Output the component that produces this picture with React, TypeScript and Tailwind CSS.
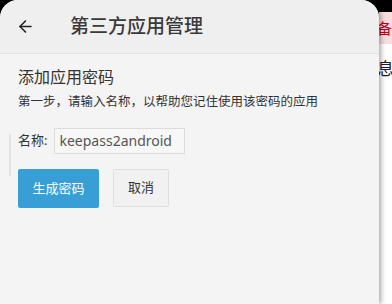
import { ArrowLeft } from "lucide-react";

export default function App() {
    return (
        <div
            className="flex w-[392px] h-[304px] bg-black overflow-hidden"
            style={{ fontFamily: '"Noto Sans", "Noto Sans CJK SC", sans-serif' }}
        >
            {/* main panel */}
            <div className="relative z-10 flex flex-col w-[379px] h-full rounded-t-[18px] bg-[#f4f4f4] shadow-[2px_0_5px_rgba(0,0,0,0.35)] overflow-hidden">
                <div className="flex items-center h-[54px] shrink-0 bg-[#efefef] border-b border-[#e2e2e2]">
                    <ArrowLeft className="ml-[16px] w-[19px] h-[19px] text-[#222]" strokeWidth={2} />
                    <h1 className="ml-[35px] text-[19px] font-medium text-[#3a3a3a] leading-none">第三方应用管理</h1>
                </div>

                <div className="px-[18px] pt-[11px]">
                    <h2 className="text-[16px] text-[#333] leading-[24px]">添加应用密码</h2>
                    <p className="mt-[5px] text-[12.5px] text-[#333] leading-[16px]">第一步，请输入名称，以帮助您记住使用该密码的应用</p>
                </div>

                <div className="relative mt-[18px] pl-[18px]">
                    <div className="absolute left-[9px] top-[6px] w-[2px] h-[42px] bg-[#e3e3e3]" />
                    <div className="flex items-center">
                        <span className="text-[13px] text-[#333]">名称:</span>
                        <div className="ml-[7px] flex items-center w-[131px] h-[26px] border border-[#dcdcdc] bg-[#f7f7f7] px-[4px]">
                            <span className="text-[14px] text-[#555] leading-none">keepass2android</span>
                        </div>
                    </div>
                    <div className="flex gap-[14px] mt-[15px]">
                        <button className="w-[81px] h-[39px] rounded-[2px] bg-[#389fd6] text-white text-[13px]">生成密码</button>
                        <button className="w-[56px] h-[38px] rounded-[2px] bg-[#f1f1f1] border border-[#dedede] text-[#333] text-[13px]">取消</button>
                    </div>
                </div>
            </div>

            {/* page behind, on the right */}
            <div className="flex flex-col w-[13px] h-full overflow-hidden">
                <div className="h-[12px] shrink-0 bg-black" />
                <div className="h-[32px] shrink-0 bg-[#f9dcde] flex items-center">
                    <span className="text-[15px] text-[#c0001a] whitespace-nowrap leading-none -ml-[2px]">备</span>
                </div>
                <div className="flex-1 bg-white pt-[16px]">
                    <span className="block text-[17px] text-[#1a1a3a] whitespace-nowrap leading-none -ml-[2px]">息</span>
                </div>
            </div>
        </div>
    );
}
